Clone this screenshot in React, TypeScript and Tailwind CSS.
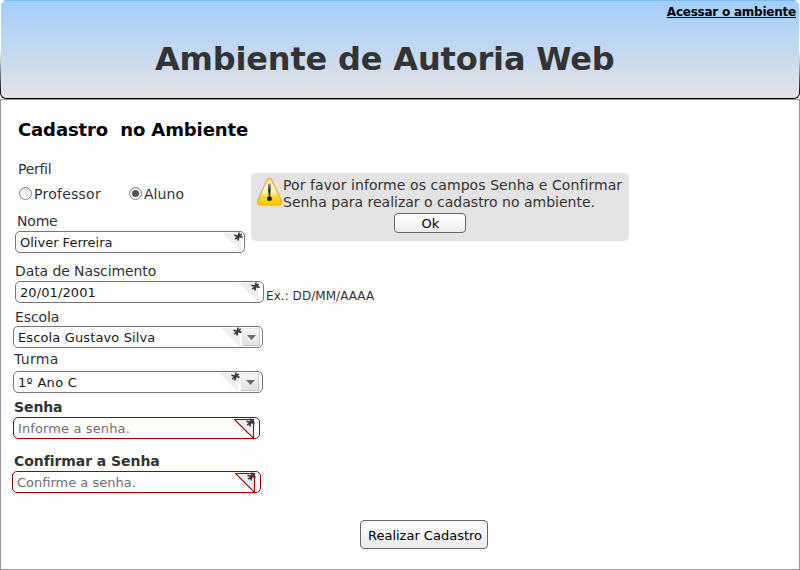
import type { ReactNode } from 'react';

function Corner({ right, error = false }: { right: string; error?: boolean }) {
  return (
    <svg className={`absolute top-0 ${right}`} width="26" height="22" viewBox="0 0 26 22">
      {error ? (
        <path d="M0.5 1.5H19.5V20.5Z" fill="#ececec" stroke="#990000" strokeWidth="1.1" />
      ) : (
        <path d="M0 1H19V20Z" fill="#efefef" />
      )}
      <path d="M17 0.5L16 8.5M12.4 3.2L20.6 5.4M19.8 1.8L13.2 7.2" stroke="#3a3a3a" strokeWidth="1.7" />
    </svg>
  );
}

function Arrow({ gap }: { gap: string }) {
  return (
    <div className={`flex h-[18px] w-[18px] items-center justify-center border border-[#e3e3e3] border-r-[#c8c8c8] border-b-[#c8c8c8] bg-gradient-to-b from-[#f6f6f6] to-[#e2e2e2] ${gap}`}>
      <svg width="9" height="5" viewBox="0 0 9 5">
        <path d="M0 0H9L4.5 5Z" fill="#6b6b6b" />
      </svg>
    </div>
  );
}

type FieldProps = {
  label: string;
  labelClass: string;
  boxClass: string;
  textClass?: string;
  value: string;
  children: ReactNode;
};

function Field({ label, labelClass, boxClass, textClass = 'text-[#1a1a1a]', value, children }: FieldProps) {
  return (
    <div className="flex flex-col items-start">
      <div className={`flex h-5 items-center whitespace-nowrap text-sm leading-5 ${labelClass}`}>{label}</div>
      <div className={`relative flex h-[22px] items-center justify-between rounded-[5px] border bg-white pl-1 ${boxClass}`}>
        <span className={`whitespace-nowrap pt-[2px] text-[13px] leading-[18px] ${textClass}`}>{value}</span>
        {children}
      </div>
    </div>
  );
}

function Radio({ label, checked = false, textClass }: { label: string; checked?: boolean; textClass: string }) {
  return (
    <div className="flex h-5 items-center gap-[2px]">
      <span className="flex h-[13px] w-[13px] items-center justify-center rounded-full border border-[#858585] bg-gradient-to-b from-[#e8e8e8] to-white">
        {checked && <span className="h-[7px] w-[7px] rounded-full bg-[#555]" />}
      </span>
      <span className={`pt-[2px] text-sm leading-5 ${textClass}`}>{label}</span>
    </div>
  );
}

function Warning() {
  return (
    <svg className="shrink-0" width="26" height="29" viewBox="0 0 26 29">
      <defs>
        <linearGradient id="amber" x1="0" y1="0" x2="0" y2="1">
          <stop offset="0" stopColor="#ffd65c" />
          <stop offset="0.3" stopColor="#fffbe0" />
          <stop offset="0.55" stopColor="#fff3a0" />
          <stop offset="0.7" stopColor="#ffd91a" />
          <stop offset="1" stopColor="#ffc400" />
        </linearGradient>
        <linearGradient id="mark" x1="0" y1="0" x2="0" y2="1">
          <stop offset="0" stopColor="#aaa" />
          <stop offset="0.6" stopColor="#111" />
          <stop offset="1" stopColor="#555" />
        </linearGradient>
      </defs>
      <path d="M10.2 2.4Q12.4 -0.4 14.6 2.4L24.6 24Q25.4 27.6 22.3 28H2.8Q-0.2 27.6 0.6 24Z" fill="url(#amber)" stroke="#f7a81b" strokeWidth="1.1" />
      <path d="M10.8 6.5H14L13.2 19H11.6Z" fill="url(#mark)" />
      <circle cx="12.4" cy="21.7" r="2.4" fill="#1a0d00" />
    </svg>
  );
}

export default function App() {
  return (
    <div className="flex h-[570px] w-[800px] flex-col overflow-hidden bg-white font-['DejaVu_Sans',sans-serif] text-[#333]">
      <header className="h-[99px] shrink-0 rounded-[6px] bg-[linear-gradient(#78bff0_0,#78bff0_1px,#fff_1px,#fff_50px,#000_96px)] p-px">
        <div className="flex h-[97px] flex-col rounded-[5px] bg-gradient-to-b from-[#a2cdfc] to-[#e3e3e3]">
          <div className="flex h-[22px] shrink-0 items-center justify-end pr-[3px]">
            <a className="whitespace-nowrap text-[12px] font-bold tracking-[-0.23px] text-black underline">Acessar o ambiente</a>
          </div>
          <h1 className="mt-[16px] ml-[154px] whitespace-nowrap text-[32px] leading-[40px] font-bold tracking-[-0.17px]">Ambiente de Autoria Web</h1>
        </div>
      </header>
      <main className="flex h-[471px] flex-col border border-[#999]">
        <h2 className="mt-[18px] ml-[17px] h-6 text-[18px] leading-6 font-bold tracking-[-0.12px] whitespace-pre text-black">Cadastro  no Ambiente</h2>
        <div className="flex h-[352px] pt-[17px]">
          <form className="flex w-[250px] shrink-0 flex-col pl-[11px]">
            <div className="ml-[6px] h-5 text-sm leading-5 tracking-[-0.3px]">Perfil</div>
            <div className="mt-[4px] mb-[1px] ml-[7px] flex h-5 items-center gap-[28px]">
              <Radio label="Professor" textClass="tracking-[0.25px]" />
              <Radio label="Aluno" textClass="tracking-[0.1px]" checked />
            </div>
            <div className="mt-[7px] ml-[3px]">
              <Field label="Nome" labelClass="ml-[2px] tracking-[-0.2px]" boxClass="w-[230px] border-[#777]" value="Oliver Ferreira">
                <Corner right="right-[-4px]" />
              </Field>
            </div>
            <div className="mt-2 ml-[3px] flex items-end">
              <Field label="Data de Nascimento" labelClass="w-[249px] tracking-[-0.1px]" boxClass="w-[249px] border-[#777]" textClass="text-[#1a1a1a] tracking-[0.1px]" value="20/01/2001">
                <Corner right="right-[-2px]" />
              </Field>
              <span className="ml-[2px] whitespace-nowrap text-[12px] leading-[14px] tracking-[0.05px]">Ex.: DD/MM/AAAA</span>
            </div>
            <div className="mt-[3px] ml-px">
              <Field label="Escola" labelClass="ml-[2px] pt-[2px] tracking-[-0.1px]" boxClass="w-[250px] border-[#777]" textClass="text-[#1a1a1a] tracking-[0.13px]" value="Escola Gustavo Silva">
                <Corner right="right-[15px]" />
                <Arrow gap="mr-[2px]" />
              </Field>
            </div>
            <div className="mt-[1px] ml-px">
              <Field label="Turma" labelClass="ml-px mb-[2px] tracking-[0.3px]" boxClass="w-[250px] border-[#777]" textClass="text-[#1a1a1a] tracking-[0.3px]" value="1º Ano C">
                <Corner right="right-[17px]" />
                <Arrow gap="mr-[3px]" />
              </Field>
            </div>
            <div className="mt-1 ml-px">
              <Field label="Senha" labelClass="ml-px font-bold tracking-[-0.1px]" boxClass="w-[247px] border-[#990000]" textClass="text-[#707070] tracking-[0.12px]" value="Informe a senha.">
                <Corner right="right-[-1px]" error />
              </Field>
            </div>
            <div className="mt-3">
              <Field label="Confirmar a Senha" labelClass="ml-[2px] font-bold tracking-[-0.06px]" boxClass="w-[249px] border-[#990000]" textClass="text-[#707070]" value="Confirme a senha.">
                <Corner right="right-[-1px]" error />
              </Field>
            </div>
          </form>
          <section className="mt-[14px] flex h-[68px] w-[378px] flex-col rounded-[5px] bg-[#e3e3e3] pt-1">
            <div className="flex h-[35px] pl-[6px]">
              <Warning />
              <p className="whitespace-nowrap text-sm leading-[17px]">
                <span className="tracking-[0.07px]">Por favor informe os campos Senha e Confirmar</span>
                <br />
                Senha para realizar o cadastro no ambiente.
              </p>
            </div>
            <button className="mt-px ml-[143px] h-5 w-[72px] rounded-[4px] border border-[#666] bg-gradient-to-b from-white to-[#ededed] pt-[1px] pl-[1px] text-[13px] leading-[18px] text-black">Ok</button>
          </section>
        </div>
        <button className="mt-[26px] ml-[359px] h-[29px] w-[128px] rounded-[4px] border border-[#666] bg-gradient-to-b from-white to-[#e9e9e9] pt-[2px] pl-[2px] text-[13px] whitespace-nowrap text-black">Realizar Cadastro</button>
      </main>
    </div>
  );
}
